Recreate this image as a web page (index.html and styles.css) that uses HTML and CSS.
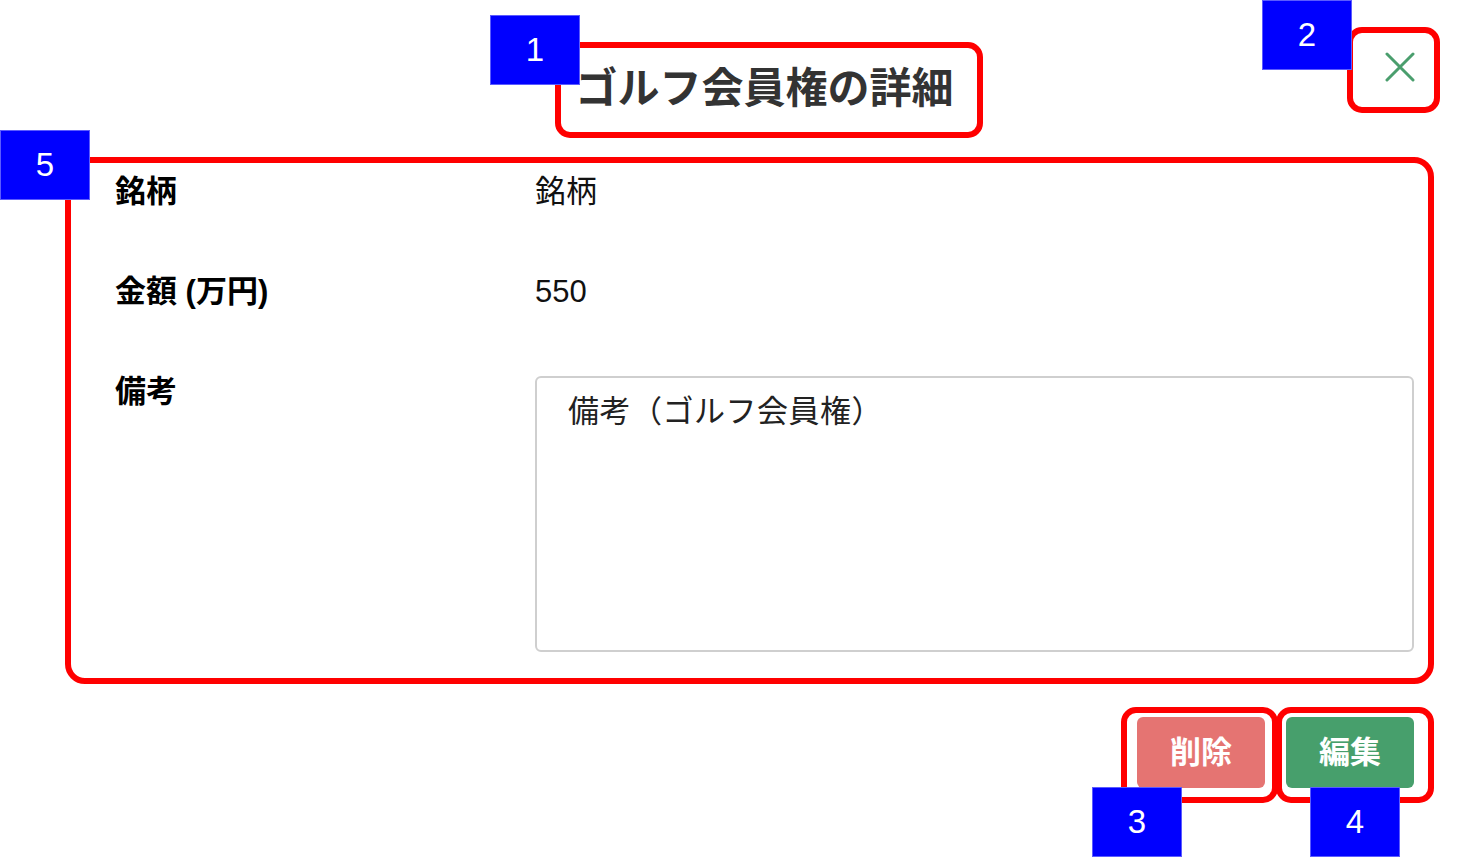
FILE: index.html
```html
<!DOCTYPE html>
<html lang="ja">
<head>
<meta charset="utf-8">
<title>ゴルフ会員権の詳細</title>
<link rel="stylesheet" href="styles.css">
</head>
<body>
<div class="page">
  <header class="head">
    <div class="spacer"></div>
    <h1 class="title">ゴルフ会員権の詳細</h1>
    <button class="close" type="button" aria-label="閉じる">
      <svg width="30" height="30" viewBox="0 0 30 30"><path d="M2 2 L28 28 M28 2 L2 28" stroke="#4a9e6d" stroke-width="3" stroke-linecap="round" fill="none"/></svg>
    </button>
  </header>

  <div class="fields">
    <div class="row">
      <div class="label">銘柄</div>
      <div class="value">銘柄</div>
    </div>
    <div class="row">
      <div class="label">金額 (万円)</div>
      <div class="value">550</div>
    </div>
    <div class="row">
      <div class="label">備考</div>
      <div class="value"><div class="memo">備考（ゴルフ会員権）</div></div>
    </div>
  </div>

  <div class="actions">
    <button class="btn btn-del" type="button">削除</button>
    <button class="btn btn-edit" type="button">編集</button>
  </div>

  <div class="annot">
    <div class="box box-title"></div>
    <div class="box box-close"></div>
    <div class="box box-fields"></div>
    <div class="box box-del"></div>
    <div class="box box-edit"></div>
    <div class="badge badge-1">1</div>
    <div class="badge badge-2">2</div>
    <div class="badge badge-5">5</div>
    <div class="badge badge-3">3</div>
    <div class="badge badge-4">4</div>
  </div>
</div>
</body>
</html>
```

FILE: styles.css
```css
* { box-sizing: border-box; }
html, body { margin: 0; padding: 0; background: #fff; }
body {
  font-family: "Liberation Sans", "Noto Sans CJK JP", sans-serif;
  color: #111;
  text-spacing-trim: space-all;
}
.page {
  position: relative;
  width: 1459px;
  height: 857px;
  padding: 0 45px 0 115px;
  overflow: hidden;
}
.head {
  display: grid;
  grid-template-columns: 1fr auto 1fr;
  align-items: start;
  padding-top: 52px;
}
.title {
  margin: 8px 0 0;
  font-family: "Noto Sans CJK JP", sans-serif;
  font-size: 42px;
  line-height: 49px;
  font-weight: 700;
  color: #333;
}
.close {
  justify-self: end;
  margin: 0 -1px 0 0;
  padding: 0;
  border: 0;
  background: none;
  width: 30px;
  height: 30px;
  display: block;
}
.close svg { display: block; }
.fields {
  margin-top: 67px;
  display: flex;
  flex-direction: column;
  gap: 68px;
}
.row {
  display: grid;
  grid-template-columns: 420px 1fr;
  align-items: start;
}
.label {
  font-size: 31px;
  line-height: 32px;
  font-weight: 700;
  color: #000;
}
.value {
  font-size: 31px;
  line-height: 32px;
  color: #111;
}
.memo {
  height: 276px;
  border: 2px solid #cfcfcf;
  border-radius: 6px;
  padding: 18px 31px;
  font-size: 31px;
  line-height: 32px;
  letter-spacing: 0.5px;
  color: #222;
}
.actions {
  margin-top: 65px;
  display: flex;
  justify-content: flex-end;
  gap: 21px;
}
.btn {
  width: 128px;
  height: 71px;
  border: 0;
  border-radius: 6px;
  color: #fff;
  font-family: "Noto Sans CJK JP", sans-serif;
  font-size: 31px;
  font-weight: 700;
  line-height: 1;
  display: flex;
  align-items: center;
  justify-content: center;
  padding: 0 0 6px;
}
.btn-del { background: #e57472; }
.btn-edit { background: #479f6c; }

/* annotation overlay */
.annot { position: absolute; inset: 0; pointer-events: none; }
.box {
  position: absolute;
  border: 6px solid #ff0000;
  border-radius: 15px;
}
.box-title { left: 555px; top: 42px; width: 428px; height: 96px; }
.box-close { left: 1347px; top: 27px; width: 93px; height: 86px; }
.box-fields { left: 65px; top: 157px; width: 1369px; height: 527px; border-radius: 20px; }
.box-del { left: 1121px; top: 707px; width: 157px; height: 96px; }
.box-edit { left: 1276px; top: 707px; width: 158px; height: 96px; }
.badge {
  position: absolute;
  width: 90px;
  height: 70px;
  background: #0000ff;
  border: 1px solid #5c5cff;
  color: #fff;
  font-family: "Liberation Sans", sans-serif;
  font-size: 33px;
  display: flex;
  align-items: center;
  justify-content: center;
}
.badge-1 { left: 490px; top: 15px; }
.badge-2 { left: 1262px; top: 0; }
.badge-5 { left: 0; top: 130px; }
.badge-3 { left: 1092px; top: 787px; }
.badge-4 { left: 1310px; top: 787px; }
```
